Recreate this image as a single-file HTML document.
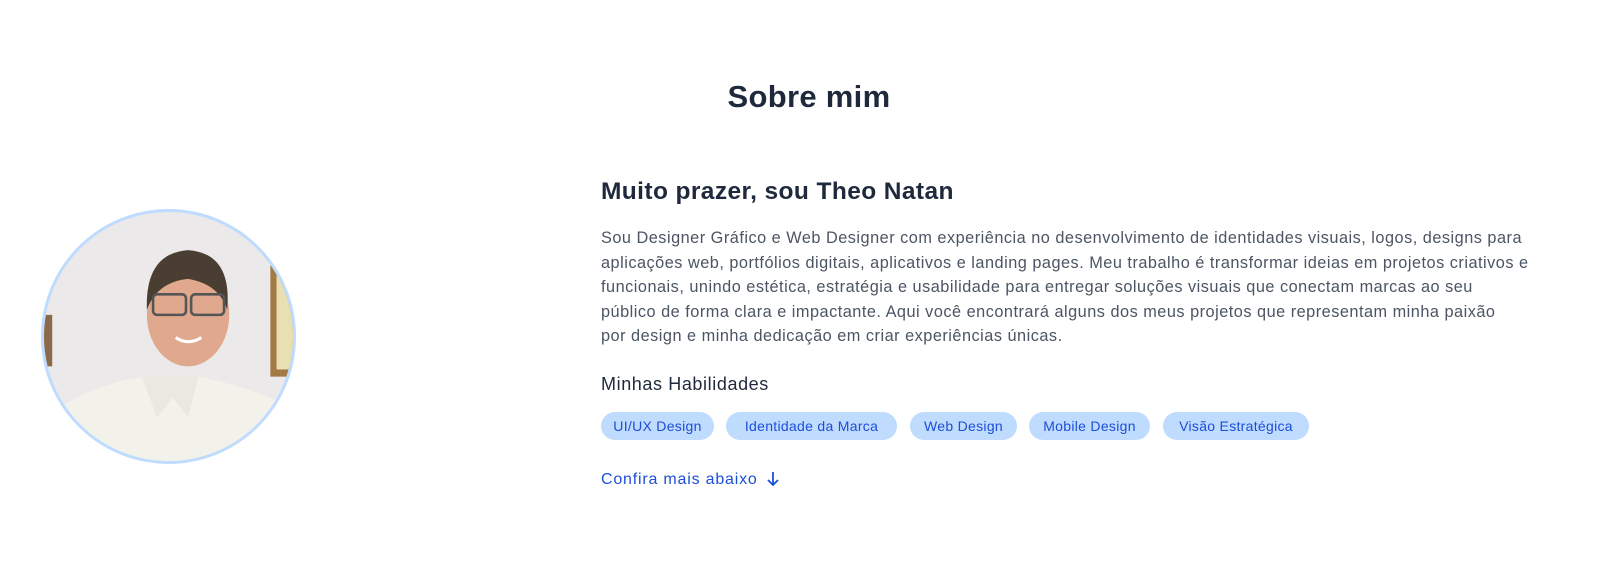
<!DOCTYPE html>
<html><head><meta charset="utf-8"><style>
body{margin:0;width:1613px;height:571px;background:#fff;font-family:"Liberation Sans",sans-serif;position:relative;overflow:hidden}
.a{position:absolute;white-space:nowrap}
h1{position:absolute;left:0;width:1618px;text-align:center;top:79px;margin:0;font-size:31px;font-weight:700;color:#1e293b;letter-spacing:0.3px}
.p{left:601px;top:226px;font-size:16.3px;line-height:24.5px;color:#4b5563;letter-spacing:0.5px}
.pill{position:absolute;top:412px;height:28px;border-radius:14px;background:#bfdbfe;color:#1d4ed8;font-size:14px;line-height:28px;text-align:center;letter-spacing:0.3px}
</style></head><body>
<h1>Sobre mim</h1>
<div class="a" style="left:41px;top:209px;width:249px;height:249px;border:3px solid #bfdbfe;border-radius:50%;overflow:hidden;background:#ece9ea">
<svg width="249" height="249" viewBox="0 0 242 242">
<rect x="220" y="50" width="30" height="110" fill="#a27a45"/><rect x="226" y="58" width="20" height="95" fill="#e8e0b0"/>
<rect x="0" y="100" width="8" height="50" fill="#8a6a4a"/>
<path d="M0 200 Q40 170 95 160 L150 160 Q200 170 242 190 L242 242 L0 242Z" fill="#f3f2ea"/>
<path d="M95 160 L110 200 L125 180 L140 200 L150 160Z" fill="#ebe9df"/>
<ellipse cx="140" cy="100" rx="40" ry="50" fill="#e0a98e"/>
<path d="M100 95 Q98 40 140 37 Q183 40 178 95 Q170 70 140 65 Q110 68 100 95Z" fill="#4a3e32"/>
<rect x="106" y="80" width="32" height="20" rx="4" fill="none" stroke="#555" stroke-width="2.5"/>
<rect x="143" y="80" width="32" height="20" rx="4" fill="none" stroke="#555" stroke-width="2.5"/>
<path d="M128 122 Q140 130 153 122" stroke="#fff" stroke-width="3" fill="none"/>
</svg></div>
<div class="a" style="left:601px;top:178px;font-size:24.5px;font-weight:700;color:#1e293b;letter-spacing:0.4px">Muito prazer, sou Theo Natan</div>
<div class="a p">Sou Designer Gráfico e Web Designer com experiência no desenvolvimento de identidades visuais, logos, designs para<br>aplicações web, portfólios digitais, aplicativos e landing pages. Meu trabalho é transformar ideias em projetos criativos e<br>funcionais, unindo estética, estratégia e usabilidade para entregar soluções visuais que conectam marcas ao seu<br>público de forma clara e impactante. Aqui você encontrará alguns dos meus projetos que representam minha paixão<br>por design e minha dedicação em criar experiências únicas.</div>
<div class="a" style="left:601px;top:374px;font-size:18px;color:#1e293b;letter-spacing:0.6px">Minhas Habilidades</div>
<div class="pill" style="left:601px;width:113px">UI/UX Design</div>
<div class="pill" style="left:726px;width:171px">Identidade da Marca</div>
<div class="pill" style="left:910px;width:107px">Web Design</div>
<div class="pill" style="left:1029px;width:121px">Mobile Design</div>
<div class="pill" style="left:1163px;width:146px">Visão Estratégica</div>
<div class="a" style="left:601px;top:471px;font-size:16px;color:#1d4ed8;letter-spacing:0.8px">Confira mais abaixo <svg width="14" height="16" viewBox="0 0 14 16" style="vertical-align:-3px;margin-left:3px"><path d="M7 1V14M2 9L7 14L12 9" stroke="#1d4ed8" stroke-width="1.8" fill="none"/></svg></div>
</body></html>
